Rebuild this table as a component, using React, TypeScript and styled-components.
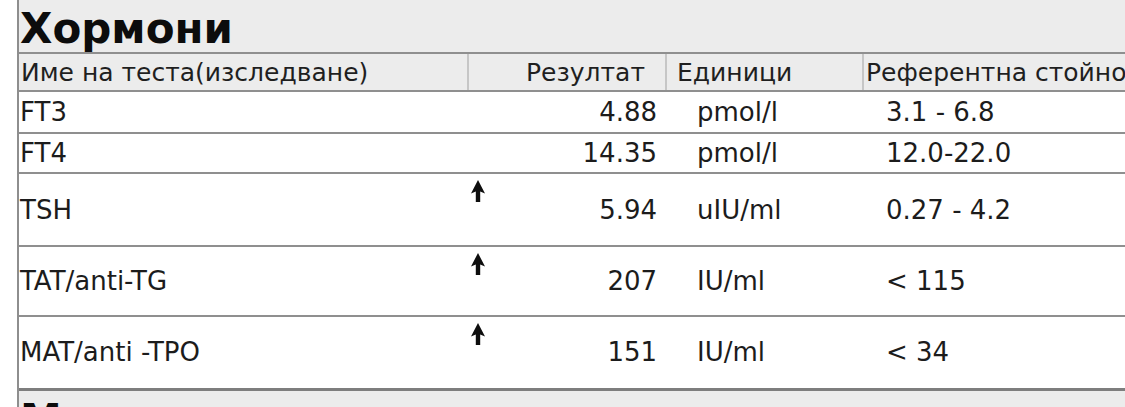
import React from "react";
import styled, { createGlobalStyle } from "styled-components";

const GlobalStyle = createGlobalStyle`
    html, body {
        margin: 0;
        padding: 0;
        background: #ffffff;
        overflow: hidden;
    }
    body {
        font-family: "DejaVu Sans", Verdana, sans-serif;
        color: #1c1c1c;
    }
`;

interface Result {
    name: string;
    high?: boolean;
    value: string;
    unit: string;
    range: string;
    height: number;
}

const hormones: Result[] = [
    { name: "FT3", value: "4.88", unit: "pmol/l", range: "3.1 - 6.8", height: 42 },
    { name: "FT4", value: "14.35", unit: "pmol/l", range: "12.0-22.0", height: 40 },
    { name: "TSH", high: true, value: "5.94", unit: "uIU/ml", range: "0.27 - 4.2", height: 73 },
    { name: "TAT/anti-TG", high: true, value: "207", unit: "IU/ml", range: "< 115", height: 70 },
    { name: "MAT/anti -TPO", high: true, value: "151", unit: "IU/ml", range: "< 34", height: 73 },
];

function UpArrow() {
    return (
        <ArrowIcon viewBox="0 0 14 22">
            <path d="M7 0 L14 13.5 L9.2 11.5 L9.2 22 L4.8 22 L4.8 11.5 L0 13.5 Z" fill="#0e0e0e" />
        </ArrowIcon>
    );
}

export default function App() {
    return (
        <>
            <GlobalStyle />
            <Page>
                <Section>
                    <Title>Хормони</Title>
                    <Table>
                        <colgroup>
                            <col style={{ width: 449 }} />
                            <col style={{ width: 27 }} />
                            <col style={{ width: 171 }} />
                            <col style={{ width: 197 }} />
                            <col style={{ width: 420 }} />
                        </colgroup>
                        <thead>
                            <tr>
                                <HeadCell>Име на теста(изследване)</HeadCell>
                                <HeadCell colSpan={2} $align="right">
                                    Резултат
                                </HeadCell>
                                <HeadCell $pad={10}>Единици</HeadCell>
                                <HeadCell $last>Референтна стойност</HeadCell>
                            </tr>
                        </thead>
                        <tbody>
                            {hormones.map((r) => (
                                <Row key={r.name} style={{ height: r.height }}>
                                    <NameCell>{r.name}</NameCell>
                                    <FlagCell>{r.high && <UpArrow />}</FlagCell>
                                    <ValueCell>{r.value}</ValueCell>
                                    <IndentCell $indent={31}>{r.unit}</IndentCell>
                                    <IndentCell $indent={23}>{r.range}</IndentCell>
                                </Row>
                            ))}
                        </tbody>
                    </Table>
                    <NextTitle>Маркери</NextTitle>
                </Section>
            </Page>
        </>
    );
}

const Page = styled.div`
    padding-left: 17px;
    width: 1400px;
`;

const Section = styled.div`
    border-left: 2px solid #8e8e8e;
    background: #ececec;
`;

const Title = styled.h2`
    margin: 0;
    height: 52px;
    padding-left: 1px;
    font-size: 42px;
    line-height: 58px;
    font-weight: bold;
    color: #0c0c0c;
    border-bottom: 2px solid #8f8f8f;
    overflow: hidden;
`;

const NextTitle = styled(Title)`
    border-bottom: none;
`;

const Table = styled.table`
    border-collapse: collapse;
    table-layout: fixed;
    width: 1264px;
    font-size: 26px;
`;

const HeadCell = styled.th<{ $align?: string; $last?: boolean; $pad?: number }>`
    height: 36px;
    padding: 0 ${(p) => (p.$align === "right" ? 20 : 2)}px 0 ${(p) => p.$pad ?? 2}px;
    text-align: ${(p) => p.$align || "left"};
    font-size: 25px;
    font-weight: normal;
    white-space: nowrap;
    overflow: hidden;
    color: #1f1f1f;
    border-bottom: 2px solid #8f8f8f;
    border-right: ${(p) => (p.$last ? "none" : "2px solid #c6c6c6")};
    vertical-align: middle;
`;

const Row = styled.tr`
    background: #ffffff;
    border-bottom: 2px solid #8f8f8f;

    &:last-child {
        border-bottom: 3px solid #7e7e7e;
    }
`;

const NameCell = styled.td`
    padding: 0 0 0 1px;
    white-space: nowrap;
    vertical-align: middle;
`;

const FlagCell = styled.td`
    padding: 6px 0 0 0;
    vertical-align: top;
    line-height: 0;
`;

const ArrowIcon = styled.svg`
    display: block;
    width: 14px;
    height: 22px;
    margin-left: 3px;
`;

const ValueCell = styled.td`
    padding: 0 9px 0 0;
    text-align: right;
    vertical-align: middle;
`;

const IndentCell = styled.td<{ $indent: number }>`
    padding: 0 0 0 ${(p) => p.$indent}px;
    white-space: nowrap;
    vertical-align: middle;
`;
